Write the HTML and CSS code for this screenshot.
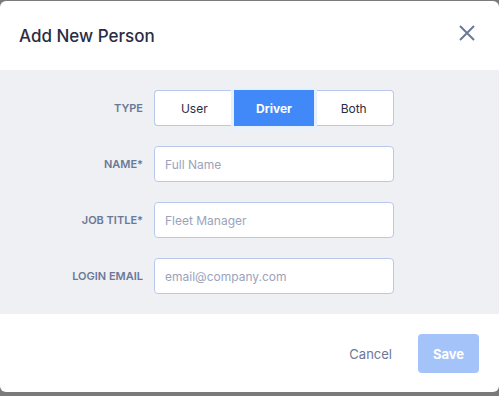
FILE: index.html
```html
<!DOCTYPE html>
<html lang="en">
<head>
  <meta charset="UTF-8" />
  <title>Add New Person</title>
  <link rel="stylesheet" href="styles.css">
</head>
<body>
  <div class="modal">
    <!-- Header -->
    <div class="modal-header">
      <h2>Add New Person</h2>
      <button class="close" aria-label="Close">
        <svg width="18" height="18" viewBox="0 0 18 18">
          <path d="M2 2 L16 16 M16 2 L2 16" stroke="#6b7896" stroke-width="2" fill="none" />
        </svg>
      </button>
    </div>

    <!-- Form -->
    <div class="modal-body">
      <label class="field-label">TYPE</label>
      <div class="segments">
        <button class="segment">User</button>
        <button class="segment active">Driver</button>
        <button class="segment">Both</button>
      </div>

      <label class="field-label">NAME*</label>
      <input type="text" class="field-input" placeholder="Full Name" />

      <label class="field-label">JOB TITLE*</label>
      <input type="text" class="field-input" placeholder="Fleet Manager" />

      <label class="field-label">LOGIN EMAIL</label>
      <input type="text" class="field-input" placeholder="email@company.com" />
    </div>

    <!-- Footer -->
    <div class="modal-footer">
      <button class="cancel">Cancel</button>
      <button class="save" disabled>Save</button>
    </div>
  </div>
</body>
</html>
```

FILE: styles.css
```css
body {
  margin: 0;
  background-color: #7a7a7a;
  font-family: Inter, "Noto Sans", sans-serif;
}

.modal {
  margin-top: 1px;
  height: 391px;
  background-color: #fff;
  border-radius: 6px;
  overflow: hidden;
  display: flex;
  flex-direction: column;
}

.modal-header {
  height: 69px;
  display: flex;
  align-items: center;
  justify-content: space-between;
  padding: 0 23px 0 19px;
}

.modal-header h2 {
  margin: 0;
  font-size: 17px;
  font-weight: 500;
  color: #2a2c42;
}

.close {
  background: none;
  border: none;
  padding: 0;
  margin-bottom: 6px;
  cursor: pointer;
  display: flex;
}

.modal-body {
  background-color: #eef0f4;
  padding: 20px 0;
  display: grid;
  grid-template-columns: 143px 240px;
  grid-auto-rows: 36px;
  column-gap: 11px;
  row-gap: 20px;
  align-items: center;
}

.field-label {
  text-align: right;
  font-size: 11px;
  font-weight: 600;
  color: #6b7896;
}

.segments {
  display: flex;
  height: 36px;
}

.segment {
  flex: 1;
  background: #fff;
  border: 1px solid #b9c8ea;
  font-family: inherit;
  font-size: 12px;
  color: #2a2c42;
  cursor: pointer;
}

.segment:first-child {
  border-radius: 4px 0 0 4px;
  border-right: none;
}

.segment:last-child {
  border-radius: 0 4px 4px 0;
  border-left: none;
}

.segment.active {
  background-color: #4189f8;
  border-color: #4189f8;
  color: #fff;
  font-weight: 700;
  box-shadow: 0 0 0 3px #e6f1fd;
  position: relative;
}

.field-input {
  height: 36px;
  box-sizing: border-box;
  border: 1px solid #b9c8ea;
  border-radius: 4px;
  padding: 0 10px;
  font-family: inherit;
  font-size: 12px;
  color: #2a2c42;
  background: #fff;
}

.field-input::placeholder {
  color: #9aa3bd;
}

.modal-footer {
  flex: 1;
  display: flex;
  justify-content: flex-end;
  align-items: flex-start;
  padding: 20px 20px 0 0;
  gap: 26px;
}

.cancel {
  height: 39px;
  background: none;
  border: none;
  padding: 0;
  font-family: inherit;
  font-size: 13px;
  color: #6b7896;
  cursor: pointer;
}

.save {
  width: 61px;
  height: 39px;
  border: none;
  border-radius: 4px;
  background-color: #a3c3f9;
  color: #fff;
  font-family: inherit;
  font-size: 13px;
  font-weight: 700;
}
```
